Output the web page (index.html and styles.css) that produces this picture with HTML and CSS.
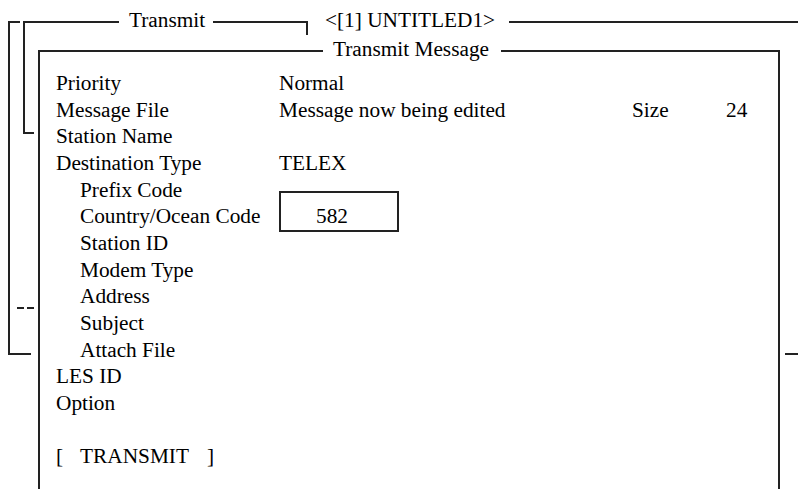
FILE: index.html
```html
<!DOCTYPE html>
<html lang="en">
<head>
    <meta charset="UTF-8">
    <meta name="viewport" content="width=device-width, initial-scale=1.0">
    <title>Transmit Message</title>
    <link rel="stylesheet" href="styles.css">
</head>
<body>

    <div class="desk">
        <!-- Windows stacked behind the dialog -->
        <div class="frame frame-menu"></div>
        <div class="frame frame-transmit"><span class="frame-title">Transmit</span></div>
        <div class="frame frame-untitled"><span class="frame-title untitled-title">&lt;[1] UNTITLED1&gt;</span></div>
        <div class="link-dash"></div>
        <div class="link-tick"></div>

        <!-- Transmit Message dialog -->
        <div class="dialog">
            <span class="dialog-title">Transmit Message</span>

            <div class="form">
                <div class="label">Priority</div>
                <div class="value span">Normal</div>

                <div class="label">Message File</div>
                <div class="value">Message now being edited</div>
                <div class="value">Size</div>
                <div class="value">24</div>

                <div class="label">Station Name</div>

                <div class="label">Destination Type</div>
                <div class="value span">TELEX</div>

                <div class="label sub">Prefix Code</div>

                <div class="label sub">Country/Ocean Code</div>
                <div class="value span field-cell">
                    <span class="edit-box">582</span>
                </div>

                <div class="label sub">Station ID</div>
                <div class="label sub">Modem Type</div>
                <div class="label sub">Address</div>
                <div class="label sub">Subject</div>
                <div class="label sub">Attach File</div>
                <div class="label">LES ID</div>
                <div class="label">Option</div>

                <div class="blank"></div>

                <div class="button-row">[<span class="button-label">TRANSMIT</span>]</div>
            </div>
        </div>
    </div>

</body>
</html>
```

FILE: styles.css
```css
/* Page */
body {
    margin: 0;
    background: #fff;
    color: #000;
    font-family: "Liberation Serif", "Times New Roman", serif;
    font-size: 21.3px;
}

.desk {
    position: relative;
    width: 798px;
    height: 489px;
    padding: 50px 0 0 38px;
    box-sizing: border-box;
    overflow: hidden;
}

/* Window outlines behind the dialog */
.frame {
    position: absolute;
    box-sizing: border-box;
    border: 0 solid #222;
}

.frame-title {
    position: absolute;
    top: -15px;
    line-height: 24px;
    background: #fff;
    white-space: nowrap;
}

.frame-menu {
    left: 8px;
    top: 21px;
    width: 23px;
    height: 334px;
    border-left-width: 2px;
    border-bottom-width: 2px;
}

.frame-menu::before {
    content: "";
    position: absolute;
    left: -2px;
    top: 0;
    width: 12px;
    height: 2px;
    background: #222;
}

.frame-transmit {
    left: 23px;
    top: 21px;
    width: 285px;
    height: 113px;
    border-left-width: 2px;
    border-top-width: 2px;
}

.frame-transmit::before {
    content: "";
    position: absolute;
    left: -2px;
    bottom: 0;
    width: 11px;
    height: 2px;
    background: #222;
}

.frame-transmit::after {
    content: "";
    position: absolute;
    right: 0;
    top: -2px;
    width: 2px;
    height: 14px;
    background: #222;
}

.frame-transmit .frame-title {
    left: 94px;
    padding: 0 8px 0 10px;
}

.frame-untitled {
    left: 313px;
    top: 21px;
    right: 0;
    height: 20px;
    border-top-width: 2px;
}

.untitled-title {
    left: 0;
    padding: 0 14px 0 12px;
}

.link-dash {
    position: absolute;
    left: 17px;
    top: 307px;
    width: 20px;
    height: 2px;
    background: repeating-linear-gradient(90deg, #222 0 7px, transparent 7px 10px);
}

.link-tick {
    position: absolute;
    left: 785px;
    top: 353px;
    width: 13px;
    height: 2px;
    background: #222;
}

/* Dialog */
.dialog {
    position: relative;
    width: 742px;
    height: 460px;
    box-sizing: border-box;
    border: 2px solid #222;
    border-bottom: none;
    padding: 18px 0 0 16px;
    background: #fff;
}

.dialog-title {
    position: absolute;
    top: -15px;
    left: 283px;
    padding: 0 12px 0 10px;
    line-height: 24px;
    background: #fff;
    white-space: nowrap;
}

.form {
    display: grid;
    grid-template-columns: 223px 353px 94px auto;
    grid-auto-rows: 26.67px;
    line-height: 26.67px;
}

.label {
    grid-column: 1;
    white-space: nowrap;
}

.label.sub {
    padding-left: 24px;
}

.value {
    white-space: nowrap;
}

.value.span {
    grid-column: 2 / -1;
}

/* Edit field over the country code */
.field-cell {
    position: relative;
}

.edit-box {
    position: absolute;
    left: 0;
    top: -12px;
    width: 120px;
    height: 41px;
    box-sizing: border-box;
    border: 2px solid #222;
    padding: 10px 0 0 35px;
    line-height: 26.67px;
    background: #fff;
}

.blank {
    grid-column: 1 / -1;
}

.button-row {
    grid-column: 1 / -1;
    white-space: nowrap;
}

.button-label {
    margin: 0 18px 0 17px;
}
```
